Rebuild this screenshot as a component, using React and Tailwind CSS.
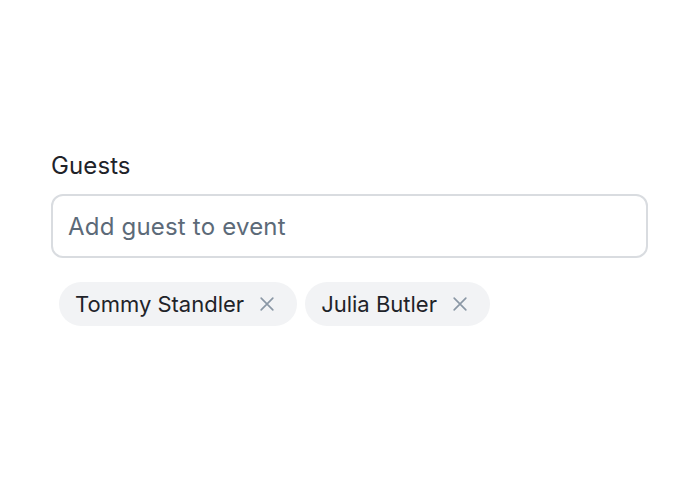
import React, { useState } from 'react'

const XIcon = () => (
  <svg width="20" height="20" viewBox="0 0 24 24" fill="none" stroke="currentColor" strokeWidth="2" strokeLinecap="round">
    <path d="M5 5l14 14M19 5L5 19" />
  </svg>
)

export default function App() {
  const [guests, setGuests] = useState(['Tommy Standler', 'Julia Butler'])

  return (
    <div className="min-h-[480px] w-[700px] bg-white pt-[150px] pl-[51px] pr-[52px]" style={{ fontFamily: 'Inter, sans-serif' }}>
      <label className="block text-[24px] leading-[32px] tracking-[0.1px] text-[#1f2329]">Guests</label>
      <input
        type="text"
        placeholder="Add guest to event"
        className="mt-[12px] block h-[64px] w-full rounded-[12px] border-2 border-[#d9dce0] px-[15px] text-[24px] tracking-[0.2px] text-[#1f2329] outline-none placeholder:text-[#5c6a78]"
      />
      <div className="mt-[24px] flex gap-[8px] pl-[8px]">
        {guests.map((g) => (
          <div key={g} className="flex h-[44px] items-center rounded-full bg-[#f2f3f5] pl-[16px] pr-[20px] text-[22px] text-[#1f2329]">
            <span>{g}</span>
            <button
              className="ml-[13px] flex items-center text-[#8a97a5]"
              onClick={() => setGuests((gs) => gs.filter((x) => x !== g))}
            >
              <XIcon />
            </button>
          </div>
        ))}
      </div>
    </div>
  )
}
